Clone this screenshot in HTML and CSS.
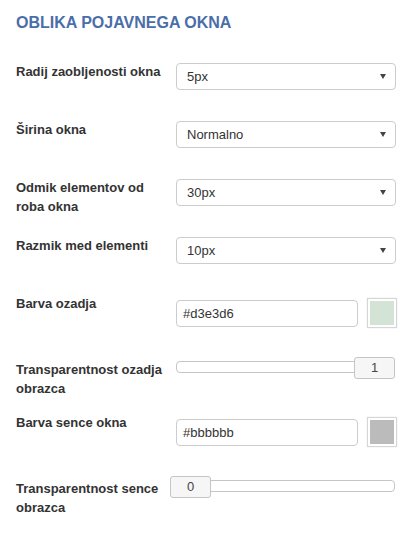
FILE: index.html
```html
<!DOCTYPE html>
<html lang="sl">
<head>
<meta charset="utf-8">
<title>Oblika pojavnega okna</title>
<link rel="stylesheet" href="styles.css">
</head>
<body>
<div class="panel">
  <h2 class="title">OBLIKA POJAVNEGA OKNA</h2>

  <div class="row">
    <label class="label">Radij zaobljenosti okna</label>
    <div class="select"><span>5px</span><svg class="caret" width="6" height="5" viewBox="0 0 6 5"><path d="M0 0H6L3 5Z" fill="#444"/></svg></div>
  </div>

  <div class="row">
    <label class="label">Širina okna</label>
    <div class="select"><span>Normalno</span><svg class="caret" width="6" height="5" viewBox="0 0 6 5"><path d="M0 0H6L3 5Z" fill="#444"/></svg></div>
  </div>

  <div class="row">
    <label class="label">Odmik elementov od roba okna</label>
    <div class="select"><span>30px</span><svg class="caret" width="6" height="5" viewBox="0 0 6 5"><path d="M0 0H6L3 5Z" fill="#444"/></svg></div>
  </div>

  <div class="row">
    <label class="label">Razmik med elementi</label>
    <div class="select"><span>10px</span><svg class="caret" width="6" height="5" viewBox="0 0 6 5"><path d="M0 0H6L3 5Z" fill="#444"/></svg></div>
  </div>

  <div class="row row-color">
    <label class="label">Barva ozadja</label>
    <div class="color-ctrl">
      <div class="text-input">#d3e3d6</div>
      <div class="swatch" style="background:#d3e3d6"></div>
    </div>
  </div>

  <div class="row row-slider">
    <label class="label">Transparentnost ozadja obrazca</label>
    <div class="slider">
      <div class="handle" style="left:177px">1</div>
    </div>
  </div>

  <div class="row row-color">
    <label class="label">Barva sence okna</label>
    <div class="color-ctrl">
      <div class="text-input">#bbbbbb</div>
      <div class="swatch" style="background:#bbbbbb"></div>
    </div>
  </div>

  <div class="row row-slider">
    <label class="label">Transparentnost sence obrazca</label>
    <div class="slider">
      <div class="handle" style="left:-7px">0</div>
    </div>
  </div>
</div>
</body>
</html>
```

FILE: styles.css
```css
* { box-sizing: border-box; }

body {
  margin: 0;
  background: #fff;
  color: #333;
  font-family: "Liberation Sans", Arial, sans-serif;
  font-size: 13px;
}

.panel {
  padding: 13px 16px 0 16px;
}

.title {
  margin: 0 0 30px 0;
  font-size: 16px;
  line-height: 20px;
  font-weight: bold;
  color: #4a6ea9;
}

.row {
  display: grid;
  grid-template-columns: 160px 220px;
  height: 58px;
  align-items: start;
}

.row-color { height: 66px; }
.row-slider { height: 53px; }

.label {
  padding-right: 8px;
  font-weight: bold;
  font-size: 13px;
  line-height: 18.5px;
  color: #333;
}

.select {
  display: flex;
  align-items: center;
  justify-content: space-between;
  height: 27px;
  padding: 0 9px 0 10px;
  border: 1px solid #ccc;
  border-radius: 4px;
  background: #fff;
  color: #333;
  font-size: 13px;
}

.caret { display: block; }

.color-ctrl {
  display: flex;
  align-items: center;
  gap: 10px;
  margin-top: 4px;
}

.text-input {
  width: 183px;
  height: 27px;
  padding: 0 6px;
  line-height: 25px;
  border: 1px solid #ccc;
  border-radius: 4px;
  color: #333;
  font-size: 13px;
}

.swatch {
  width: 28px;
  height: 28px;
  border: 2px solid #fff;
  box-shadow: 0 0 1px 1px #d6d6d6;
}

.slider {
  position: relative;
  height: 12px;
  margin-top: 0;
  width: 219px;
  border: 1px solid #c5c5c5;
  border-radius: 4px;
  background: #fff;
}

.handle {
  position: absolute;
  top: -5px;
  width: 41px;
  height: 22px;
  border: 1px solid #c5c5c5;
  border-radius: 3px;
  background: #f6f6f6;
  color: #454545;
  font-size: 13px;
  line-height: 19px;
  text-align: center;
}
```
